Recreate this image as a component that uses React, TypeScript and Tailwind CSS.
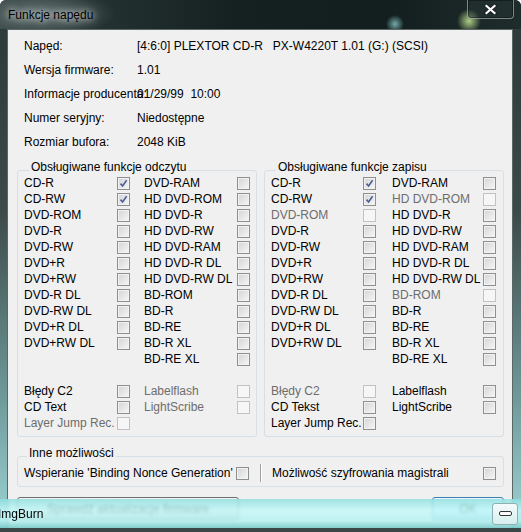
import clsx from 'clsx';

type Item = { label: string; checked?: boolean; disabled?: boolean } | null;

function Check({ checked, disabled }: { checked?: boolean; disabled?: boolean }) {
  return (
    <span
      className={clsx(
        'flex h-[13px] w-[13px] shrink-0 items-center justify-center border',
        disabled
          ? 'border-[#c2c2c2] bg-[#f6f6f6]'
          : 'border-[#8e8f8f] bg-[linear-gradient(135deg,#d2d4d6,#f7f7f7)] shadow-[inset_0_0_0_1px_#f2f2f2]',
      )}
    >
      {checked ? (
        <svg width="9" height="9" viewBox="0 0 9 9">
          <path d="M1.5 4.6 L3.6 7 L7.6 1.2" fill="none" stroke="#4b5f96" strokeWidth="1.6" />
        </svg>
      ) : null}
    </span>
  );
}

function Label({ item }: { item: Item }) {
  if (!item) return <span />;
  return (
    <span className={clsx('whitespace-pre', item.disabled ? 'text-[#6d6d6d]' : 'text-black')}>
      {item.label}
    </span>
  );
}

function Cell({ item }: { item: Item }) {
  if (!item) return <span />;
  return <Check checked={item.checked} disabled={item.disabled} />;
}

const readRows: [Item, Item][] = [
  [{ label: 'CD-R', checked: true }, { label: 'DVD-RAM' }],
  [{ label: 'CD-RW', checked: true }, { label: 'HD DVD-ROM' }],
  [{ label: 'DVD-ROM' }, { label: 'HD DVD-R' }],
  [{ label: 'DVD-R' }, { label: 'HD DVD-RW' }],
  [{ label: 'DVD-RW' }, { label: 'HD DVD-RAM' }],
  [{ label: 'DVD+R' }, { label: 'HD DVD-R DL' }],
  [{ label: 'DVD+RW' }, { label: 'HD DVD-RW DL' }],
  [{ label: 'DVD-R DL' }, { label: 'BD-ROM' }],
  [{ label: 'DVD-RW DL' }, { label: 'BD-R' }],
  [{ label: 'DVD+R DL' }, { label: 'BD-RE' }],
  [{ label: 'DVD+RW DL' }, { label: 'BD-R XL' }],
  [null, { label: 'BD-RE XL' }],
  [null, null],
  [{ label: 'Błędy C2' }, { label: 'Labelflash', disabled: true }],
  [{ label: 'CD Text' }, { label: 'LightScribe', disabled: true }],
  [{ label: 'Layer Jump Rec.', disabled: true }, null],
];

const writeRows: [Item, Item][] = [
  [{ label: 'CD-R', checked: true }, { label: 'DVD-RAM' }],
  [{ label: 'CD-RW', checked: true }, { label: 'HD DVD-ROM', disabled: true }],
  [{ label: 'DVD-ROM', disabled: true }, { label: 'HD DVD-R' }],
  [{ label: 'DVD-R' }, { label: 'HD DVD-RW' }],
  [{ label: 'DVD-RW' }, { label: 'HD DVD-RAM' }],
  [{ label: 'DVD+R' }, { label: 'HD DVD-R DL' }],
  [{ label: 'DVD+RW' }, { label: 'HD DVD-RW DL' }],
  [{ label: 'DVD-R DL' }, { label: 'BD-ROM', disabled: true }],
  [{ label: 'DVD-RW DL' }, { label: 'BD-R' }],
  [{ label: 'DVD+R DL' }, { label: 'BD-RE' }],
  [{ label: 'DVD+RW DL' }, { label: 'BD-R XL' }],
  [null, { label: 'BD-RE XL' }],
  [null, null],
  [{ label: 'Błędy C2', disabled: true }, { label: 'Labelflash' }],
  [{ label: 'CD Tekst' }, { label: 'LightScribe' }],
  [{ label: 'Layer Jump Rec.' }, null],
];

const info = [
  ['Napęd:', '[4:6:0] PLEXTOR CD-R   PX-W4220T 1.01 (G:) (SCSI)'],
  ['Wersja firmware:', '1.01'],
  ['Informacje producenta:', '01/29/99  10:00'],
  ['Numer seryjny:', 'Niedostępne'],
  ['Rozmiar bufora:', '2048 KiB'],
];

export default function App() {
  return (
    <div className="relative flex h-[532px] w-[521px] flex-col overflow-hidden rounded-t-[6px] bg-[linear-gradient(180deg,#2c3838_0%,#3d4a4a_40%,#6f9a9a_75%,#9fd6d6_100%)] font-['Liberation_Sans',Arial,sans-serif] text-[12px] text-black">
      {/* title bar */}
      <div className="flex h-[29px] shrink-0 items-start bg-[radial-gradient(circle_at_395px_24px,rgba(150,215,215,0.75)_0,rgba(150,215,215,0)_9px),radial-gradient(circle_at_469px_21px,rgba(200,235,150,0.85)_0,rgba(200,235,150,0)_12px),radial-gradient(ellipse_70px_22px_at_45px_14px,rgba(120,135,135,0.7),rgba(120,135,135,0)),linear-gradient(90deg,#3e4b4b_0%,#243131_20%,#152121_45%,#131f1f_75%,#1f2c2c_100%)]">
        <span className="ml-[8px] mt-[7px] leading-[16px] [text-shadow:0_0_6px_rgba(255,255,255,0.9),0_0_12px_rgba(255,255,255,0.6)]">
          Funkcje napędu
        </span>
        <div className="ml-auto mr-[7px] flex h-[19px] w-[47px] items-center justify-center rounded-b-[4px] border border-t-0 border-[rgba(200,210,210,0.55)] bg-[rgba(40,55,55,0.4)] shadow-[inset_0_0_0_1px_rgba(0,0,0,0.35)]">
          <svg width="13" height="11" viewBox="0 0 13 11">
            <path d="M2 1.5 L11 9.5 M11 1.5 L2 9.5" stroke="#1a2222" strokeWidth="4" strokeLinecap="square" />
            <path d="M2.5 2 L10.5 9 M10.5 2 L2.5 9" stroke="#ffffff" strokeWidth="2.2" strokeLinecap="square" />
          </svg>
        </div>
      </div>

      {/* body */}
      <div className="flex min-h-0 flex-1 pl-[7px] pr-[8px]">
        <div className="flex w-[506px] flex-col overflow-hidden border border-b-0 border-[#5b6767] bg-[#f0f0f0] pl-[9px] pr-[8px] pt-[4px]">
          <div className="flex flex-col">
            {info.map(([k, v]) => (
              <div key={k} className="flex h-[24px] items-center">
                <span className="w-[120px] shrink-0 whitespace-nowrap pl-[7px]">{k}</span>
                <span className="whitespace-pre">{v}</span>
              </div>
            ))}
          </div>

          <div className="mt-[6px] flex justify-between">
            <fieldset className="w-[240px] rounded-[3px] border border-[#d5dfe5] pb-[5px] pl-[6px]">
              <legend className="ml-[5px] px-[2px] pb-[6px] leading-[14px]">Obsługiwane funkcje odczytu</legend>
              <div className="-mt-[5px] grid grid-cols-[93px_27px_93px_13px]">
                {readRows.map(([a, b], i) => (
                  <div key={i} className="contents">
                    <div className="flex h-[16px] items-center"><Label item={a} /></div>
                    <div className="flex h-[16px] items-center"><Cell item={a} /></div>
                    <div className="flex h-[16px] items-center"><Label item={b} /></div>
                    <div className="flex h-[16px] items-center"><Cell item={b} /></div>
                  </div>
                ))}
              </div>
            </fieldset>
            <fieldset className="w-[240px] rounded-[3px] border border-[#d5dfe5] pb-[5px] pl-[6px]">
              <legend className="ml-[5px] px-[2px] pb-[6px] leading-[14px]">Obsługiwane funkcje zapisu</legend>
              <div className="-mt-[5px] grid grid-cols-[92px_29px_91px_13px]">
                {writeRows.map(([a, b], i) => (
                  <div key={i} className="contents">
                    <div className="flex h-[16px] items-center"><Label item={a} /></div>
                    <div className="flex h-[16px] items-center"><Cell item={a} /></div>
                    <div className="flex h-[16px] items-center"><Label item={b} /></div>
                    <div className="flex h-[16px] items-center"><Cell item={b} /></div>
                  </div>
                ))}
              </div>
            </fieldset>
          </div>

          <fieldset className="mt-[9px] rounded-[3px] border border-[#d5dfe5] pb-[4px] pl-[6px]">
            <legend className="ml-[3px] px-[2px] pb-[6px] leading-[14px]">Inne możliwości</legend>
            <div className="-mt-[2px] flex h-[18px] items-center">
              <span className="w-[212px] whitespace-nowrap">Wspieranie 'Binding Nonce Generation'</span>
              <Check />
              <span className="ml-[11px] h-[18px] w-[2px] border-l border-r border-l-[#a0a0a0] border-r-white" />
              <span className="ml-[10px] w-[211px] whitespace-nowrap">Możliwość szyfrowania magistrali</span>
              <Check />
            </div>
          </fieldset>

          <div className="mt-[10px] flex justify-between">
            <button
              type="button"
              className="h-[23px] w-[222px] rounded-[3px] border border-[#707070] bg-[linear-gradient(180deg,#f2f2f2,#ebebeb_50%,#dddddd_51%,#cfcfcf)] text-[12px]"
            >
              Sprawdź aktualizacje firmware
            </button>
            <button
              type="button"
              className="h-[23px] w-[72px] rounded-[3px] border border-[#3c7fb1] bg-[linear-gradient(180deg,#eaf6fd,#d9f0fc_50%,#bee6fd_51%,#a7d9f5)] text-[12px]"
            >
              OK
            </button>
          </div>
        </div>
      </div>

      {/* other window's task strip lying over the dialog */}
      <div className="absolute bottom-[4px] left-0 right-0 flex h-[29px] items-center bg-[linear-gradient(180deg,rgba(140,222,222,0.8),rgba(196,248,248,0.84)_40%,rgba(182,242,242,0.84)_75%,rgba(120,200,200,0.9))] backdrop-blur-[1.5px]">
        <span className="-ml-[2px]">ImgBurn</span>
        <div className="ml-auto mr-[3px] flex h-[22px] w-[26px] items-center justify-center rounded-[3px] border border-[#8fb0b0] bg-[linear-gradient(180deg,#f4fbfb,#d7eeee)]">
          <span className="h-[5px] w-[13px] rounded-[2px] border border-[#333] bg-white" />
        </div>
      </div>
      <div className="absolute bottom-0 left-0 right-0 h-[4px] bg-[#3b4646]" />
    </div>
  );
}
